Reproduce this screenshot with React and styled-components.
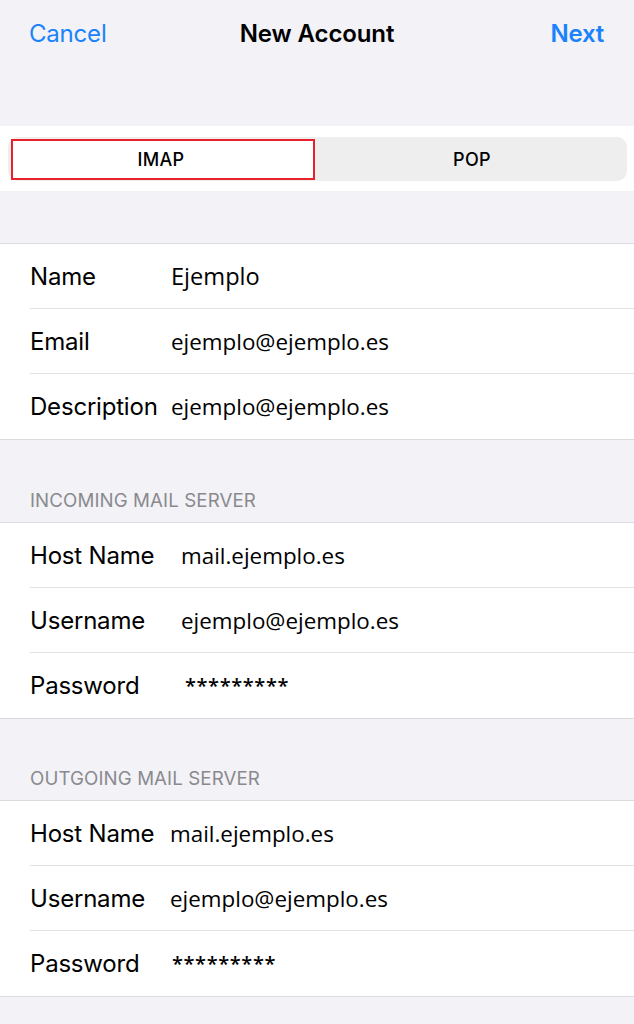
import React from 'react';
import styled, { createGlobalStyle } from 'styled-components';

const GlobalStyle = createGlobalStyle`
  html, body {
    margin: 0;
    padding: 0;
    background: #f2f2f7;
  }
  * {
    box-sizing: border-box;
  }
`;

const Page = styled.div`
  width: 634px;
  min-height: 1024px;
  background: #f2f2f7;
  font-family: Inter, 'Liberation Sans', sans-serif;
  color: #000;
  overflow: hidden;
`;

const NavBar = styled.header`
  height: 126px;
  display: grid;
  grid-template-columns: 1fr auto 1fr;
  align-items: start;
  padding: 19px 30px 0 30px;
`;

const NavButton = styled.span`
  font-size: 24px;
  color: #1a82fb;
  justify-self: ${(p) => (p.$end ? 'end' : 'start')};
  font-weight: ${(p) => (p.$bold ? 600 : 400)};
  letter-spacing: -0.2px;
  margin-left: ${(p) => (p.$end ? '0' : '-1px')};
`;

const NavTitle = styled.h1`
  margin: 0;
  font-size: 24px;
  font-weight: 600;
  letter-spacing: -0.1px;
`;

const SegmentBand = styled.div`
  background: #fff;
  height: 65px;
  padding: 11px 7px 10px 8px;
`;

const Segmented = styled.div`
  height: 44px;
  background: #eeeeef;
  border-radius: 10px;
  display: grid;
  grid-template-columns: 304px 1fr;
  padding: 2px 0 1px 3px;
`;

const Segment = styled.div`
  display: flex;
  align-items: center;
  justify-content: center;
  font-size: 18px;
  font-weight: 500;
  letter-spacing: 0.3px;
  background: ${(p) => (p.$active ? '#fff' : 'transparent')};
  border: ${(p) => (p.$active ? '2px solid #e8222c' : 'none')};
  padding-right: ${(p) => (p.$active ? '4px' : '0')};
  padding-left: ${(p) => (p.$active ? '0' : '2px')};
`;

const Spacer = styled.div`
  height: ${(p) => p.$h}px;
  border-bottom: 1px solid #dcdce0;
`;

const SectionHeader = styled.div`
  height: ${(p) => p.$h || 83}px;
  display: flex;
  align-items: flex-end;
  padding: 0 0 10px 30px;
  font-size: 18.7px;
  color: #8a8a8e;
  letter-spacing: 0.1px;
  border-bottom: 1px solid #dcdce0;
`;

const Group = styled.section`
  background: #fff;
  border-bottom: 1px solid #dcdce0;
`;

const Row = styled.div`
  height: 65px;
  margin-left: 30px;
  display: flex;
  align-items: center;
  border-bottom: ${(p) => (p.$last ? 'none' : '1px solid #e3e3e6')};
`;

const Label = styled.span`
  font-size: 24px;
  letter-spacing: -0.2px;
  width: ${(p) => p.$w}px;
  flex-shrink: 0;
  white-space: nowrap;
`;

const Value = styled.span`
  font-family: 'Open Sans', 'Liberation Sans', sans-serif;
  font-size: ${(p) => p.$size || 22.4}px;
  font-weight: ${(p) => (p.$stars ? 600 : 400)};
  letter-spacing: ${(p) => (p.$stars ? '0.6px' : '0')};
  white-space: nowrap;
`;

const sections = [
  {
    title: null,
    rows: [
      { label: 'Name', value: 'Ejemplo', x: 141, size: 23.6 },
      { label: 'Email', value: 'ejemplo@ejemplo.es', x: 141 },
      { label: 'Description', value: 'ejemplo@ejemplo.es', x: 141 },
    ],
  },
  {
    title: 'INCOMING MAIL SERVER',
    rows: [
      { label: 'Host Name', value: 'mail.ejemplo.es', x: 151 },
      { label: 'Username', value: 'ejemplo@ejemplo.es', x: 151 },
      { label: 'Password', value: '*********', x: 155, stars: true, size: 20 },
    ],
  },
  {
    title: 'OUTGOING MAIL SERVER',
    headerHeight: 82,
    rows: [
      { label: 'Host Name', value: 'mail.ejemplo.es', x: 140 },
      { label: 'Username', value: 'ejemplo@ejemplo.es', x: 140 },
      { label: 'Password', value: '*********', x: 142, stars: true, size: 20 },
    ],
  },
];

const App = () => {
  return (
    <Page>
      <GlobalStyle />
      <NavBar>
        <NavButton>Cancel</NavButton>
        <NavTitle>New Account</NavTitle>
        <NavButton $end $bold>
          Next
        </NavButton>
      </NavBar>
      <SegmentBand>
        <Segmented>
          <Segment $active>IMAP</Segment>
          <Segment>POP</Segment>
        </Segmented>
      </SegmentBand>
      {sections.map((section, i) => (
        <React.Fragment key={i}>
          {section.title ? (
            <SectionHeader $h={section.headerHeight}>{section.title}</SectionHeader>
          ) : (
            <Spacer $h={53} />
          )}
          <Group>
            {section.rows.map((row, j) => (
              <Row key={row.label} $last={j === section.rows.length - 1}>
                <Label $w={row.x}>{row.label}</Label>
                <Value $size={row.size} $stars={row.stars}>
                  {row.value}
                </Value>
              </Row>
            ))}
          </Group>
        </React.Fragment>
      ))}
    </Page>
  );
};

export default App;
